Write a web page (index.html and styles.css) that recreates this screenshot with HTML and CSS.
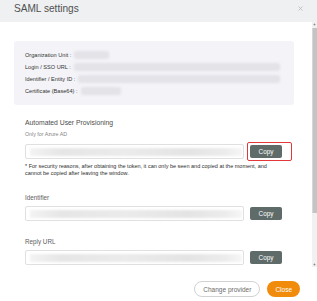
FILE: index.html
```html
<!DOCTYPE html>
<html lang="en">
<head>
<meta charset="utf-8">
<title>SAML settings</title>
<link rel="stylesheet" href="styles.css">
</head>
<body>
<div class="modal">
  <header class="modal-header">
    <h2 class="modal-title">SAML settings</h2>
    <button class="close" aria-label="Close">
      <svg width="5" height="5" viewBox="0 0 5 5"><path d="M0.5 0.5 L4.5 4.5 M4.5 0.5 L0.5 4.5" stroke="#bdbdbd" stroke-width="0.9" fill="none"/></svg>
    </button>
  </header>
  <div class="modal-main">
    <div class="modal-body">
      <div class="info">
        <div class="info-row"><span class="k">Organization Unit :</span><span class="v v-org"></span></div>
        <div class="info-row"><span class="k">Login / SSO URL :</span><span class="v v-long"></span></div>
        <div class="info-row"><span class="k">Identifier / Entity ID :</span><span class="v v-long"></span></div>
        <div class="info-row"><span class="k">Certificate (Base64) :</span><span class="v v-cert"></span></div>
      </div>

      <section class="field">
        <h3 class="field-title">Automated User Provisioning</h3>
        <p class="hint">Only for Azure AD</p>
        <div class="copy-row">
          <div class="input"><span class="blur-bar"></span></div>
          <div class="copy-wrap highlight"><button class="copy">Copy</button></div>
        </div>
        <p class="note">* For security reasons, after obtaining the token, it can only be seen and copied at the moment, and<br>cannot be copied after leaving the window.</p>
      </section>

      <section class="field">
        <div class="label label-id">Identifier</div>
        <div class="copy-row">
          <div class="input"><span class="blur-bar"></span></div>
          <div class="copy-wrap"><button class="copy">Copy</button></div>
        </div>
      </section>

      <section class="field">
        <div class="label label-reply">Reply URL</div>
        <div class="copy-row">
          <div class="input"><span class="blur-bar"></span></div>
          <div class="copy-wrap"><button class="copy">Copy</button></div>
        </div>
      </section>
    </div>
    <div class="scrollbar" aria-hidden="true">
      <span class="sb-btn"></span>
      <span class="sb-track"><span class="sb-thumb"></span></span>
      <span class="sb-btn"></span>
    </div>
  </div>
  <footer class="modal-footer">
    <button class="btn btn-outline">Change provider</button>
    <button class="btn btn-primary">Close</button>
  </footer>
</div>
</body>
</html>
```
FILE: styles.css
```css
* { box-sizing: border-box; margin: 0; padding: 0; }

body {
  margin: 0;
  background: #fff;
  font-family: "Liberation Sans", Arial, sans-serif;
}

.modal {
  width: 317px;
  height: 301px;
  display: flex;
  flex-direction: column;
  overflow: hidden;
  background: #fff;
}

.modal-header {
  flex: none;
  height: 22px;
  background: #eef0f2;
  display: flex;
  justify-content: space-between;
  align-items: flex-start;
  padding: 4px 14px 0 14px;
}

.modal-title {
  font-size: 10.1px;
  line-height: 10px;
  font-weight: normal;
  color: #505050;
}

.close {
  border: none;
  background: none;
  width: 5px;
  height: 5px;
  margin-top: 2px;
  display: block;
}
.close svg { display: block; }

.modal-main {
  flex: 1;
  min-height: 0;
  display: flex;
}

.modal-body {
  flex: 1;
  min-width: 0;
  overflow: hidden;
  padding: 19px 18px 0 14px;
}

.scrollbar {
  flex: none;
  width: 5px;
  display: flex;
  flex-direction: column;
  background: #f1f1f1;
}

.sb-btn {
  flex: none;
  height: 5px;
  background: radial-gradient(circle at 50% 50%, #8a8a8a 0 0.7px, transparent 1.2px);
}

.sb-track {
  flex: 1;
  padding-top: 1px;
}

.sb-thumb {
  display: block;
  height: 185px;
  background: #c4c4c4;
  border-left: 1px solid #d6d6d6;
}

.info {
  background: #f4f4f8;
  border-radius: 3px;
  padding: 8px 11px;
}

.info-row {
  display: flex;
  align-items: center;
  height: 12px;
  font-size: 5.6px;
  color: #333;
}

.v {
  height: 8px;
  margin-left: 3px;
  background: #e3e3e8;
  border-radius: 2px;
  filter: blur(1.2px);
}
.v-org { width: 35px; }
.v-cert { width: 40px; }
.v-long { flex: 1; margin-right: 3px; }

.field {
  padding: 0 12px 0 11px;
}

.field-title {
  margin-top: 13px;
  font-size: 6.8px;
  line-height: 10px;
  font-weight: normal;
  color: #4d4d4d;
}

.hint {
  margin-top: 2px;
  font-size: 5.3px;
  line-height: 8px;
  color: #858585;
}

.copy-row {
  display: flex;
  align-items: center;
  gap: 6px;
  height: 15px;
  margin-top: 6px;
}

.label + .copy-row { margin-top: 4px; }

.input {
  flex: 1;
  height: 15px;
  border: 1px solid #e0e0e0;
  border-radius: 2px;
  background: #fff;
  padding: 3px 1px 2px 4px;
}

.blur-bar {
  display: block;
  height: 100%;
  background: linear-gradient(90deg, #f3f3f3 0%, #e6e6e6 15%, #ebebeb 45%, #e4e4e4 75%, #ececec 92%, #f6f6f6 100%);
  filter: blur(1px);
}

.copy-wrap {
  position: relative;
  flex: none;
}

.copy {
  display: block;
  width: 32px;
  height: 13px;
  border: none;
  border-radius: 2px;
  background: #5e6b68;
  color: #fff;
  font-family: inherit;
  font-size: 6.4px;
}

.highlight::after {
  content: "";
  position: absolute;
  left: -3px;
  top: -3px;
  right: -10px;
  bottom: -3px;
  border: 1px solid #e2383a;
  border-radius: 2px;
}

.note {
  margin-top: 4px;
  font-size: 5.5px;
  line-height: 6.6px;
  color: #2e2e2e;
  white-space: nowrap;
}

.label {
  font-size: 6.3px;
  line-height: 8px;
  color: #606060;
}
.label-id { margin-top: 18px; }
.label-reply { margin-top: 17px; }

.modal-footer {
  flex: none;
  height: 34px;
  display: flex;
  justify-content: flex-end;
  align-items: flex-start;
  gap: 7px;
  padding: 14px 17px 0 0;
}

.btn {
  height: 16px;
  border-radius: 8px;
  padding: 0 8px;
  font-family: inherit;
  font-size: 6.5px;
}

.btn-outline {
  border: 1px solid #d2d2d2;
  background: #fff;
  color: #6a6a6a;
}

.btn-primary {
  border: none;
  background: #f08b0c;
  color: #fff;
}
```
